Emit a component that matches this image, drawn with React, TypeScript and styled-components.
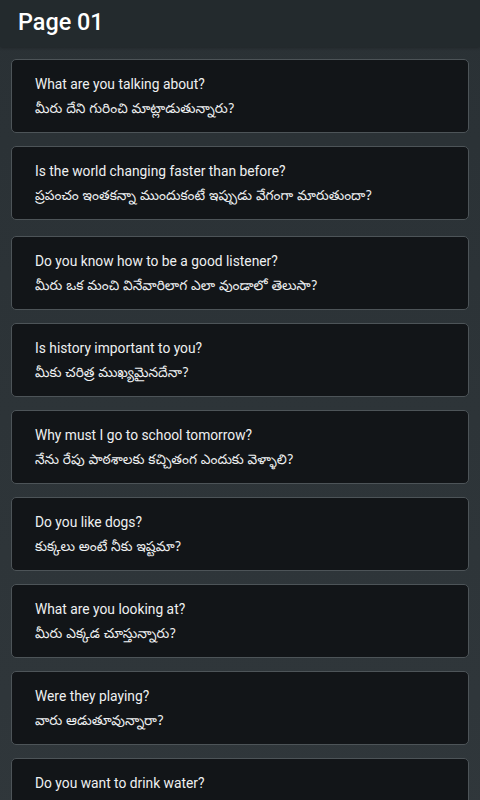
import React from "react";
import styled, { createGlobalStyle } from "styled-components";

const Global = createGlobalStyle`
  html, body { margin: 0; padding: 0; }
  body {
    background: #2c3337;
    font-family: Roboto, "Noto Sans", "Noto Sans Telugu", sans-serif;
    -webkit-font-smoothing: antialiased;
  }
`;

const Screen = styled.div`
  width: 480px;
  min-height: 800px;
  background: linear-gradient(180deg, #2a3135 0%, #30373b 100%);
  display: flex;
  flex-direction: column;
`;

const Header = styled.header`
  height: 47px;
  box-sizing: border-box;
  background: #232a2d;
  display: flex;
  align-items: center;
  padding: 0 18px 3px 18px;
  box-shadow: 0 1px 3px rgba(0, 0, 0, 0.25);
`;

const Title = styled.h1`
  margin: 0;
  font-family: Roboto, "Noto Sans", sans-serif;
  font-size: 23.4px;
  font-weight: 500;
  color: #ffffff;
`;

const List = styled.div`
  display: flex;
  flex-direction: column;
  gap: 13px;
  padding: 12px 11px 0 11px;
`;

const Card = styled.div<{ $extra?: number }>`
  height: 74px;
  box-sizing: border-box;
  background: #121518;
  border: 1.5px solid #4d5458;
  border-radius: 5px;
  padding: 14px 22px 0 23px;
  display: flex;
  flex-direction: column;
  gap: 6px;
  margin-top: ${(p) => p.$extra ?? 0}px;
`;

const English = styled.div`
  font-family: Roboto, "Noto Sans", sans-serif;
  font-size: 13.8px;
  line-height: 20px;
  color: #eef0f1;
`;

const Telugu = styled.div`
  font-family: "Noto Sans Telugu", "Noto Sans", Roboto, sans-serif;
  font-size: 13.7px;
  line-height: 22px;
  color: #eef0f1;
`;

const items: [string, string][] = [
  ["What are you talking about?", "మీరు దేని గురించి మాట్లాడుతున్నారు?"],
  ["Is the world changing faster than before?", "ప్రపంచం ఇంతకన్నా ముందుకంటే ఇప్పుడు  వేగంగా మారుతుందా?"],
  ["Do you know how to be a good listener?", "మీరు ఒక మంచి వినేవారిలాగ ఎలా వుండాలో తెలుసా?"],
  ["Is history important to you?", "మీకు చరిత్ర ముఖ్యమైనదేనా?"],
  ["Why must I go to school tomorrow?", "నేను రేపు పాఠశాలకు కచ్చితంగ ఎందుకు వెళ్ళాలి?"],
  ["Do you like dogs?", "కుక్కలు అంటే నీకు ఇష్టమా?"],
  ["What are you looking at?", "మీరు ఎక్కడ చూస్తున్నారు?"],
  ["Were they playing?", "వారు ఆడుతూవున్నారా?"],
  ["Do you want to drink water?", "మీరు నీళ్ళు తాగాలనుకుంటున్నారా?"],
];

export default function App() {
  return (
    <>
      <Global />
      <Screen>
        <Header>
          <Title>Page 01</Title>
        </Header>
        <List>
          {items.map(([en, te], i) => (
            <Card key={i} $extra={i === 2 ? 3 : 0}>
              <English>{en}</English>
              <Telugu>{te}</Telugu>
            </Card>
          ))}
        </List>
      </Screen>
    </>
  );
}
